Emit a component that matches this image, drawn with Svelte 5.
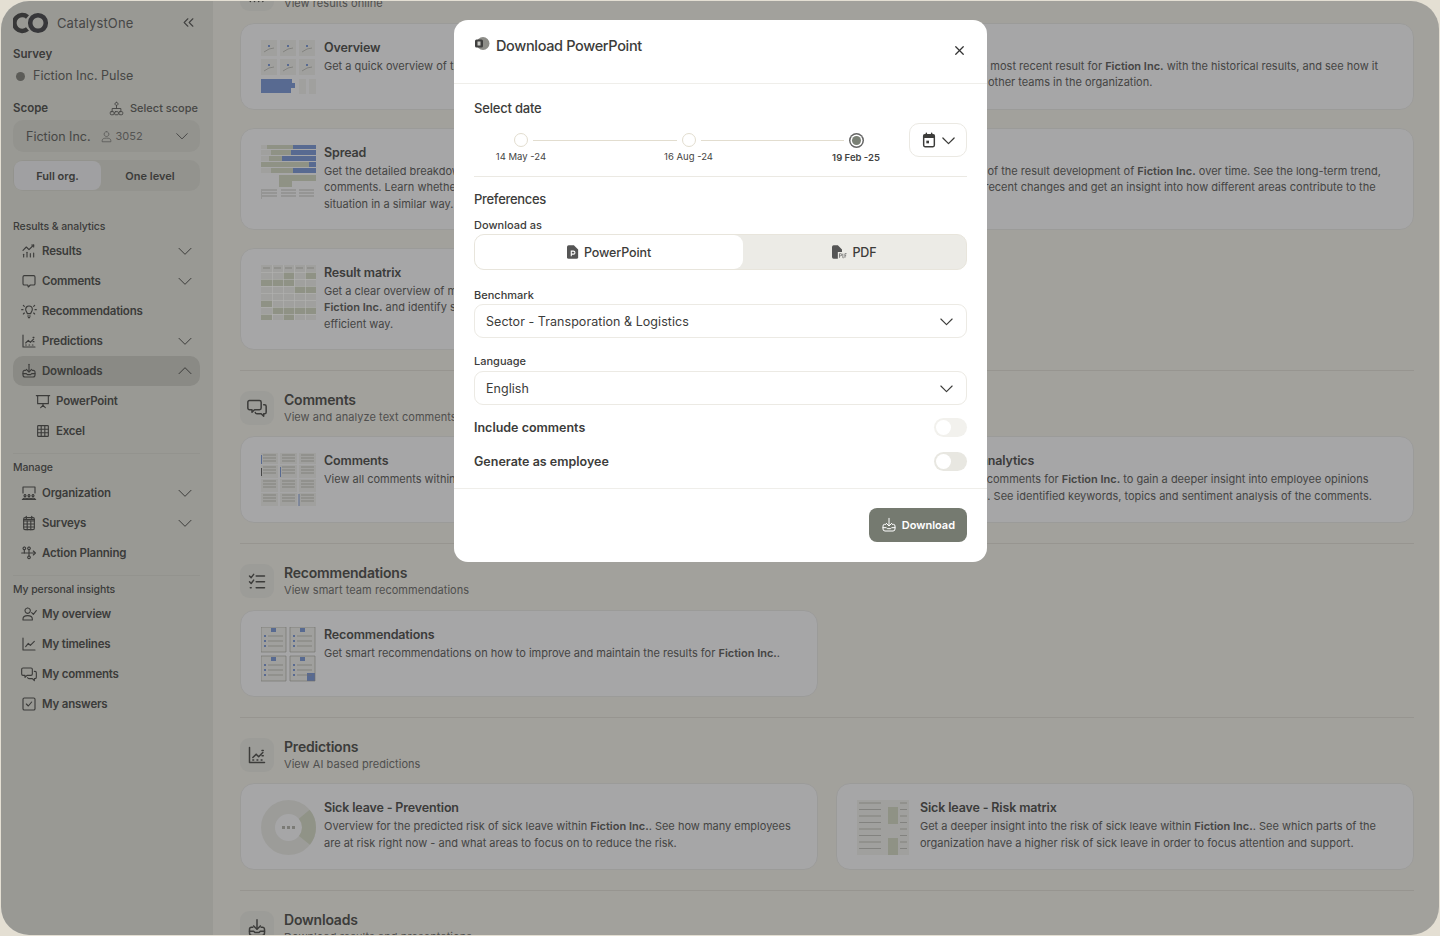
<script>
  const SAGE = '#cdd1bf';
  const BLUE = '#7f98d0';
  const PALE = '#e6e6e2';

  const icons = {
    chevDown: ['M3 8l9 9 9-9'],
    chevUp: ['M3 16l9-9 9 9'],
    chevsLeft: ['M11 18l-6-6 6-6', 'M19 18l-6-6 6-6'],
    close: ['M6 6l12 12', 'M18 6L6 18'],
    results: ['M4 21v-4', 'M9 21v-7', 'M14 21v-5', 'M19 21v-6', 'M3 11l5-5 4 4 7-7', 'M16 3h3v3'],
    comment: ['M5 4h14a2 2 0 0 1 2 2v10a2 2 0 0 1-2 2h-5l-3 3-1-3H5a2 2 0 0 1-2-2V6a2 2 0 0 1 2-2z'],
    bulb: ['M9.500 16c0-2-2.500-3-2.500-6.500a5 5 0 0 1 10 0c0 3.500-2.500 4.500-2.500 6.500z', 'M10 19.500h4', 'M11 22h2', 'M1 10h2', 'M21 10h2', 'M3.500 3.500L5 5', 'M20.500 3.500L19 5', 'M3.500 16.500L5 15', 'M20.500 16.500L19 15'],
    predict: ['M3 3v18h18', 'M7 15l4-4 3 3 5-5', 'M7 18h1', 'M12 18h1', 'M17 18h1', 'M18 6.500h1.500', 'M18 13h1.500'],
    download: ['M12 2v11', 'M8 9.500l4 4 4-4', 'M7 11H5.500A2.500 2.500 0 0 0 3 13.500V18a3 3 0 0 0 3 3h12a3 3 0 0 0 3-3v-4.500a2.500 2.500 0 0 0-2.500-2.500H17', 'M3 16h5l1.500 1.500h5L16 16h5'],
    slides: ['M2 4h20', 'M4 4v12h16V4', 'M12 16v2.500', 'M8.500 22l3.500-3.500 3.500 3.500'],
    grid: ['M5 4h14a1 1 0 0 1 1 1v14a1 1 0 0 1-1 1H5a1 1 0 0 1-1-1V5a1 1 0 0 1 1-1z', 'M4 9.300h16', 'M4 14.700h16', 'M9.300 4v16', 'M14.700 4v16'],
    org: ['M3 12V3h18v9', 'M6 14.500a1.500 1.500 0 1 0 0.010 0', 'M12 14.500a1.500 1.500 0 1 0 0.010 0', 'M18 14.500a1.500 1.500 0 1 0 0.010 0', 'M2 21.500h20', 'M3.500 21c0-2 5-2 5 0', 'M9.500 21c0-2 5-2 5 0', 'M15.500 21c0-2 5-2 5 0'],
    survey: ['M8 2v4', 'M16 2v4', 'M6 4h12a2 2 0 0 1 2 2v14a2 2 0 0 1-2 2H6a2 2 0 0 1-2-2V6a2 2 0 0 1 2-2z', 'M4 7h16', 'M4 9h16', 'M4 13.500h16', 'M4 18h16', 'M9.300 9v13', 'M14.700 9v13'],
    action: ['M5 3a2 2 0 1 0 .01 0', 'M12 3a2 2 0 1 0 .01 0', 'M12 16.500a2 2 0 1 0 .01 0', 'M1 12h20', 'M18.500 9l3 3-3 3', 'M5 7v5', 'M12 7v9.500'],
    userCheck: ['M10 3a4 4 0 1 0 .01 0', 'M3 21v-1.500C3 16 6 14.500 10 14.500s7 1.500 7 5V21z', 'M16 10l2.500 2.500L23 7'],
    timeline: ['M3 3v18h18', 'M7 16l4-5 3 3 6-6'],
    comments: ['M3 3h12a2 2 0 0 1 2 2v7a2 2 0 0 1-2 2H9l-3 3v-3H3a2 2 0 0 1-2-2V5a2 2 0 0 1 2-2z', 'M20 8h1a2 2 0 0 1 2 2v7a2 2 0 0 1-2 2h-1v3l-3-3h-5a2 2 0 0 1-2-1.500'],
    check: ['M5 3h14a2 2 0 0 1 2 2v14a2 2 0 0 1-2 2H5a2 2 0 0 1-2-2V5a2 2 0 0 1 2-2z', 'M8 12l3 3 5-6'],
    tasks: ['M3 6l2 2 3-4', 'M3 13l2 2 3-4', 'M4 20h1', 'M11 6h10', 'M11 13h10', 'M11 20h10'],
    sitemap: ['M12 2a2.500 2.500 0 1 0 .01 0', 'M12 7v5', 'M5 17v-5h14v5', 'M3.500 17h3a1.500 1.500 0 0 1 1.500 1.500v2A1.500 1.500 0 0 1 6.500 22h-3A1.500 1.500 0 0 1 2 20.500v-2A1.500 1.500 0 0 1 3.500 17z', 'M10.500 17h3a1.500 1.500 0 0 1 1.500 1.500v2a1.500 1.500 0 0 1-1.500 1.500h-3A1.500 1.500 0 0 1 9 20.500v-2a1.500 1.500 0 0 1 1.500-1.500z', 'M17.500 17h3a1.500 1.500 0 0 1 1.500 1.500v2a1.500 1.500 0 0 1-1.500 1.500h-3a1.500 1.500 0 0 1-1.500-1.500v-2a1.500 1.500 0 0 1 1.500-1.500z'],
    user: ['M12 3a4.500 4.500 0 1 0 .01 0', 'M4 21v-1.500C4 16 7.500 15 12 15s8 1 8 4.500V21z']
  };

  const nav = [
    {
      label: 'Results & analytics',
      items: [
        { icon: 'results', text: 'Results', chev: 'chevDown' },
        { icon: 'comment', text: 'Comments', chev: 'chevDown' },
        { icon: 'bulb', text: 'Recommendations' },
        { icon: 'predict', text: 'Predictions', chev: 'chevDown' },
        { icon: 'download', text: 'Downloads', chev: 'chevUp', active: true },
        { icon: 'slides', text: 'PowerPoint', sub: true },
        { icon: 'grid', text: 'Excel', sub: true }
      ]
    },
    {
      label: 'Manage',
      items: [
        { icon: 'org', text: 'Organization', chev: 'chevDown' },
        { icon: 'survey', text: 'Surveys', chev: 'chevDown' },
        { icon: 'action', text: 'Action Planning' }
      ]
    },
    {
      label: 'My personal insights',
      items: [
        { icon: 'userCheck', text: 'My overview' },
        { icon: 'timeline', text: 'My timelines' },
        { icon: 'comments', text: 'My comments' },
        { icon: 'check', text: 'My answers' }
      ]
    }
  ];

  // thumbnails are lists of [x, y, w, h, colour] rects and [x1, y1, x2, y2] dark lines
  function overviewThumb() {
    const rects = [], lines = [];
    for (const y of [0, 19]) {
      for (const x of [0, 19, 38]) {
        rects.push([x, y, 16, 16, PALE]);
        lines.push([x + 3, y + 12, x + 8, y + 9], [x + 8, y + 9, x + 13, y + 8]);
        rects.push([x + 7, y + 5, 2, 2, BLUE]);
      }
    }
    rects.push([0, 39, 31, 4, BLUE], [0, 43, 34, 5, BLUE], [0, 48, 30, 5, BLUE]);
    rects.push([38, 39, 7, 15, PALE], [48, 39, 7, 15, PALE]);
    return { rects, lines };
  }

  function spreadThumb() {
    const rects = [
      [0, 0, 32, 4, PALE], [6, 0, 26, 4, SAGE], [32, 0, 23, 4, BLUE],
      [0, 5, 30, 5, PALE], [10, 5, 20, 5, SAGE], [30, 5, 25, 5, BLUE],
      [0, 11, 21, 5, PALE], [8, 11, 13, 5, SAGE], [21, 11, 34, 5, BLUE],
      [0, 17, 48, 5, SAGE], [48, 17, 7, 5, BLUE],
      [0, 23, 32, 5, PALE], [10, 23, 22, 5, SAGE], [32, 23, 23, 5, BLUE],
      [18, 30, 37, 6, SAGE], [18, 36, 13, 6, SAGE]
    ];
    const lines = [];
    for (const y of [45, 48, 51]) {
      for (const x of [1, 20, 38]) lines.push([x, y, x + 15, y]);
    }
    lines.push([0, 44, 0, 54]);
    return { rects, lines };
  }

  function matrixThumb() {
    const rects = [[0, 0, 55, 55, PALE]];
    const on = [[2, 1], [4, 1], [0, 2], [1, 2], [2, 2], [3, 3], [4, 3], [0, 5], [1, 6], [2, 6], [3, 6], [4, 6], [0, 7], [2, 7]];
    for (const [c, r] of on) rects.push([c * 11, r * 7, 11, 7, SAGE]);
    for (let i = 1; i < 5; i++) rects.push([i * 11, 0, 0.6, 55, '#fff']);
    for (let i = 1; i < 8; i++) rects.push([0, i * 7, 55, 0.6, '#fff']);
    return { rects, lines: [[2, 3, 9, 3], [13, 3, 20, 3], [24, 3, 31, 3], [35, 3, 42, 3], [46, 3, 53, 3]] };
  }

  function commentsThumb() {
    const rects = [], lines = [];
    for (const x of [0, 19, 38]) {
      for (const y of [0, 12, 26, 40]) {
        rects.push([x, y, 17, y === 0 ? 11 : 13, PALE]);
        for (let l = 2; l < 11; l += 3) lines.push([x + 2, y + l, x + 15, y + l]);
      }
    }
    rects.push([0, 2, 1, 9, BLUE], [0, 15, 1, 8, '#666'], [19, 14, 1, 10, BLUE], [37.500, 41, 1, 12, BLUE]);
    return { rects, lines };
  }

  function recsThumb() {
    const rects = [], lines = [];
    for (const [x, y] of [[0, 0], [29, 0], [0, 29], [29, 29]]) {
      rects.push([x, y, 25, 25, PALE]);
      rects.push([x + 10, y + 1, 5, 4, BLUE]);
      for (const l of [9, 14, 19]) {
        rects.push([x + 3, y + l - 1, 2, 2, BLUE]);
        lines.push([x + 7, y + l, x + 22, y + l]);
      }
      lines.push([x, y, x + 25, y], [x, y + 25, x + 25, y + 25], [x, y, x, y + 25], [x + 25, y, x + 25, y + 25]);
    }
    rects.push([46, 46, 8, 8, BLUE]);
    return { rects, lines };
  }

  function riskThumb() {
    const rects = [[0, 0, 52, 55, PALE], [31, 7, 10, 17, SAGE], [31, 38, 10, 17, SAGE]];
    const lines = [];
    for (let y = 3; y < 55; y += 6.500) {
      lines.push([2, y, 24, y], [43, y, 50, y]);
    }
    return { rects, lines };
  }

  const thumbs = {
    overview: overviewThumb(),
    spread: spreadThumb(),
    matrix: matrixThumb(),
    comments: commentsThumb(),
    recs: recsThumb(),
    risk: riskThumb()
  };

  const sections = [
    {
      icon: 'results',
      title: 'Results',
      sub: 'View results online',
      cards: [
        { thumb: 'overview', title: 'Overview', lines: [['Get a quick overview of the main results for ', 'Fiction Inc.']] },
        { thumb: 'overview', title: 'History', lines: [['Compare the most recent result for ', 'Fiction Inc.', ' with the historical results, and see how it'], ['compares to other teams in the organization.']] },
        { thumb: 'spread', title: 'Spread', lines: [['Get the detailed breakdown of answers and'], ['comments. Learn whether employees see the'], ['situation in a similar way.']] },
        { thumb: 'spread', title: 'Timeline', lines: [['An overview of the result development of ', 'Fiction Inc.', ' over time. See the long-term trend,'], ['and identify recent changes and get an insight into how different areas contribute to the'], ['total.']] },
        { thumb: 'matrix', title: 'Result matrix', lines: [['Get a clear overview of materials across'], ['', 'Fiction Inc.', ' and identify strengths in an'], ['efficient way.']] }
      ]
    },
    {
      icon: 'comments',
      title: 'Comments',
      sub: 'View and analyze text comments',
      cards: [
        { thumb: 'comments', title: 'Comments', lines: [['View all comments within the organization.']] },
        { thumb: 'comments', title: 'Comment analytics', lines: [['Examine the comments for ', 'Fiction Inc.', ' to gain a deeper insight into employee opinions'], ['and attitudes. See identified keywords, topics and sentiment analysis of the comments.']] }
      ]
    },
    {
      icon: 'tasks',
      title: 'Recommendations',
      sub: 'View smart team recommendations',
      cards: [
        { thumb: 'recs', title: 'Recommendations', lines: [['Get smart recommendations on how to improve and maintain the results for ', 'Fiction Inc.', '.']] }
      ]
    },
    {
      icon: 'predict',
      title: 'Predictions',
      sub: 'View AI based predictions',
      cards: [
        { thumb: 'donut', title: 'Sick leave - Prevention', lines: [['Overview for the predicted risk of sick leave within ', 'Fiction Inc.', '. See how many employees'], ['are at risk right now - and what areas to focus on to reduce the risk.']] },
        { thumb: 'risk', title: 'Sick leave - Risk matrix', lines: [['Get a deeper insight into the risk of sick leave within ', 'Fiction Inc.', '. See which parts of the'], ['organization have a higher risk of sick leave in order to focus attention and support.']] }
      ]
    },
    {
      icon: 'download',
      title: 'Downloads',
      sub: 'Download results and presentations',
      cards: []
    }
  ];

  const steps = [
    { date: '14 May -24' },
    { date: '16 Aug -24' },
    { date: '19 Feb -25', active: true }
  ];
</script>

{#snippet icon(name, size = 16, width = 1.6)}
  <svg class="icon" viewBox="0 0 24 24" width={size} height={size} stroke-width={width}>
    {#each icons[name] as d}
      <path {d} />
    {/each}
  </svg>
{/snippet}

{#snippet thumbnail(name)}
  <svg class="thumb" viewBox="0 0 55 55" width="55" height="55">
    {#if name === 'donut'}
      <circle cx="27.500" cy="27.500" r="20.500" fill="none" stroke="#e0e0dc" stroke-width="14" />
      <circle cx="27.500" cy="27.500" r="20.500" fill="none" stroke="#cfd3c2" stroke-width="14" stroke-dasharray="28 101" transform="rotate(-40 27.500 27.500)" />
      <path d="M21 27.500h3M26 27.500h3M31 27.500h3" stroke="#b0b0aa" stroke-width="3" />
    {:else}
      {#each thumbs[name].rects as [x, y, w, h, fill]}
        <rect {x} {y} width={w} height={h} {fill} />
      {/each}
      {#each thumbs[name].lines as [x1, y1, x2, y2]}
        <line {x1} {y1} {x2} {y2} stroke="#9d9d98" stroke-width="0.6" />
      {/each}
    {/if}
  </svg>
{/snippet}

<div class="app">
  <div class="window">
    <aside class="sidebar">
      <div class="brand">
        <svg class="logo" viewBox="0 0 36 22" width="36" height="22">
          <path d="M14.500 4.900a8 8 0 1 0 0 12.200" fill="none" stroke="#4f4f4f" stroke-width="4.600" />
          <circle cx="25" cy="11" r="7.800" fill="none" stroke="#4f5054" stroke-width="4.600" />
        </svg>
        <span class="brand-name">CatalystOne</span>
        <span class="collapse">{@render icon('chevsLeft', 15, 1.8)}</span>
      </div>
      <div class="small-head survey">Survey</div>
      <div class="pulse"><span class="dot"></span>Fiction Inc. Pulse</div>
      <div class="scope-row">
        <span class="small-head">Scope</span>
        <span class="select-scope">{@render icon('sitemap', 15, 1.5)}Select scope</span>
      </div>
      <div class="scope-select">
        <span class="scope-name">Fiction Inc.</span>
        <span class="scope-count">{@render icon('user', 13, 1.4)}3052</span>
        <span class="push">{@render icon('chevDown', 14, 1.7)}</span>
      </div>
      <div class="scope-seg">
        <span class="on">Full org.</span>
        <span>One level</span>
      </div>

      {#each nav as group, g}
        {#if g > 0}<div class="side-rule"></div>{/if}
        <div class="group-label" class:first={g === 0}>{group.label}</div>
        <ul class="nav" class:tight={g !== 1}>
          {#each group.items as item}
            <li class="nav-item" class:active={item.active} class:sub={item.sub}>
              {@render icon(item.icon, 16, 1.7)}
              <span>{item.text}</span>
              {#if item.chev}
                <span class="push chev">{@render icon(item.chev, 16, 1.5)}</span>
              {/if}
            </li>
          {/each}
        </ul>
      {/each}
    </aside>

    <main class="main">
      <div class="content">
        {#each sections as section}
          <section class="section">
            <header class="sec-head">
              <span class="sec-icon">{@render icon(section.icon, 20, 1.8)}</span>
              <div>
                <h2>{section.title}</h2>
                <p>{section.sub}</p>
              </div>
            </header>
            {#if section.cards.length}
              <div class="cards">
                {#each section.cards as card}
                  <article class="card">
                    {@render thumbnail(card.thumb)}
                    <div class="card-text">
                      <h3>{card.title}</h3>
                      {#each card.lines as [before, strong, after]}
                        <p>{before}{#if strong}<b>{strong}</b>{/if}{after ?? ''}</p>
                      {/each}
                    </div>
                  </article>
                {/each}
              </div>
            {/if}
          </section>
        {/each}
      </div>
    </main>

    <div class="backdrop">
      <div class="modal">
        <header class="modal-head">
          <svg class="ppt" viewBox="0 0 16 16" width="16" height="16">
            <circle cx="9" cy="7.500" r="6.500" fill="#8d8d88" />
            <rect x="1" y="3.500" width="8" height="8" rx="1.500" fill="#3f3f3f" />
            <rect x="3.500" y="5.500" width="3" height="4" fill="#c9c9c4" />
          </svg>
          <h1>Download PowerPoint</h1>
          <span class="close">{@render icon('close', 15, 2)}</span>
        </header>

        <div class="modal-body">
          <h4>Select date</h4>
          <div class="date-row">
            <div class="stepper">
              {#each steps as step, i}
                {#if i > 0}<span class="track"></span>{/if}
                <div class="step" class:current={step.active}>
                  <span class="knob"></span>
                  <span class="date">{step.date}</span>
                </div>
              {/each}
            </div>
            <div class="cal-btn">
              <svg class="icon" viewBox="0 0 24 24" width="16" height="16" stroke-width="2.200">
                <path d="M8 2v4M16 2v4M6 4h12a2 2 0 0 1 2 2v14a2 2 0 0 1-2 2H6a2 2 0 0 1-2-2V6a2 2 0 0 1 2-2z" />
                <rect class="solid" x="4" y="4" width="16" height="5" />
                <rect class="solid" x="8" y="13" width="4" height="4" />
              </svg>
              {@render icon('chevDown', 15, 2)}
            </div>
          </div>
          <div class="modal-rule"></div>
          <h4 class="prefs">Preferences</h4>
          <div class="field-label first">Download as</div>
          <div class="format-seg">
            <div class="format on">
              <svg class="fmt-icon" viewBox="0 0 14 16" width="12" height="14">
                <path d="M2 0h6l5 5v9a2 2 0 0 1-2 2H2a2 2 0 0 1-2-2V2a2 2 0 0 1 2-2z" fill="#555" />
                <path d="M5 13V7h2.500a1.500 1.500 0 0 1 0 3.500H5" fill="none" stroke="#fff" stroke-width="1.300" />
              </svg>
              PowerPoint
            </div>
            <div class="format">
              <svg class="fmt-icon" viewBox="0 0 18 16" width="15" height="14">
                <path d="M2 0h5l5 5v3H7v8H2a2 2 0 0 1-2-2V2a2 2 0 0 1 2-2z" fill="#555" />
                <path d="M9 15v-5h1.500a1 1 0 0 1 0 2.500H9M13 10v5h1M17.500 10H15.500v5M15.500 12.500h1.500" fill="none" stroke="#555" stroke-width="0.800" />
              </svg>
              PDF
            </div>
          </div>
          <div class="field-label bench">Benchmark</div>
          <div class="dropdown">Sector - Transporation &amp; Logistics{@render icon('chevDown', 15, 1.8)}</div>
          <div class="field-label lang">Language</div>
          <div class="dropdown">English{@render icon('chevDown', 15, 1.8)}</div>
          <div class="switch-row first-switch">
            <span>Include comments</span>
            <span class="switch pale"></span>
          </div>
          <div class="switch-row">
            <span>Generate as employee</span>
            <span class="switch"></span>
          </div>
        </div>

        <footer class="modal-foot">
          <button class="download">{@render icon('download', 16, 1.5)}Download</button>
        </footer>
      </div>
    </div>
  </div>
</div>

<style>
  :global(body) {
    margin: 0;
    font-family: 'Inter', 'Liberation Sans', sans-serif;
    background: #e4dfd3;
  }

  .app {
    width: 1440px;
    height: 936px;
    padding: 1px;
    box-sizing: border-box;
    background: #e4dfd3;
    overflow: hidden;
  }

  .window {
    position: relative;
    display: flex;
    height: 100%;
    border-radius: 28px;
    overflow: hidden;
    background: #e9e7e0;
    color: #565654;
  }

  .icon {
    fill: none;
    stroke: currentColor;
    stroke-linecap: round;
    stroke-linejoin: round;
    flex: none;
  }

  .icon .solid {
    fill: currentColor;
    stroke: none;
  }

  .thumb {
    display: block;
    flex: none;
  }

  /* sidebar */
  .sidebar {
    width: 212px;
    flex: none;
    box-sizing: border-box;
    padding: 0 13px 0 12px;
    background: #dcdcd5;
    overflow: hidden;
  }

  .brand {
    display: flex;
    align-items: center;
    height: 43px;
  }

  .logo {
    flex: none;
  }

  .brand-name {
    margin-left: 8px;
    font-size: 13px;
    letter-spacing: 0.1px;
    color: #666;
  }

  .collapse {
    display: flex;
    margin-left: auto;
    margin-right: 4px;
    color: #5f5f5d;
  }

  .small-head {
    font-size: 11.500px;
    font-weight: 600;
    line-height: 16px;
  }

  .survey {
    margin-top: 2px;
  }

  .pulse {
    display: flex;
    align-items: center;
    gap: 8px;
    margin-top: 5px;
    font-size: 12.500px;
    line-height: 18px;
    color: #666664;
  }

  .dot {
    width: 9px;
    height: 9px;
    margin-left: 3px;
    border-radius: 50%;
    background: #85857f;
  }

  .scope-row {
    display: flex;
    align-items: center;
    justify-content: space-between;
    margin-top: 14px;
    height: 18px;
  }

  .select-scope {
    display: flex;
    align-items: center;
    gap: 6px;
    margin-right: 2px;
    font-size: 11px;
    font-weight: 500;
    color: #666664;
  }

  .scope-select {
    display: flex;
    align-items: center;
    height: 32px;
    margin-top: 3px;
    padding: 0 11px 0 13px;
    border-radius: 10px;
    background: #d3d3cc;
    color: #666664;
  }

  .scope-name {
    font-size: 12.500px;
  }

  .scope-count {
    display: flex;
    align-items: center;
    gap: 3px;
    margin-left: 9px;
    font-size: 11px;
    color: #7a7a78;
  }

  .push {
    display: flex;
    margin-left: auto;
  }

  .scope-seg {
    display: flex;
    height: 31px;
    margin-top: 8px;
    padding: 1px;
    box-sizing: border-box;
    border-radius: 10px;
    background: #d3d3cc;
    font-size: 11px;
    font-weight: 600;
  }

  .scope-seg span {
    flex: 1;
    display: flex;
    align-items: center;
    justify-content: center;
    border-radius: 8px;
  }

  .scope-seg .on {
    background: #e6e6e8;
    flex: 0 0 87px;
  }

  .group-label {
    margin-top: 6px;
    font-size: 10.500px;
    font-weight: 500;
    line-height: 16px;
    letter-spacing: -0.1px;
  }

  .group-label.first {
    margin-top: 28px;
  }

  .side-rule {
    height: 1px;
    margin-top: 7px;
    background: #d3d3cc;
  }

  .nav {
    list-style: none;
    margin: 2px 0 0;
    padding: 0;
  }

  .nav.tight {
    margin-top: 1px;
  }

  .nav-item {
    display: flex;
    align-items: center;
    gap: 5px;
    height: 30px;
    padding: 0 7px 0 8px;
    border-radius: 10px;
    font-size: 11.500px;
    font-weight: 600;
    letter-spacing: -0.2px;
  }

  .nav-item.active {
    background: #c6c6bf;
  }

  .nav-item.sub {
    padding-left: 22px;
  }

  /* main content, scrolled a little so the first heading is cut off */
  .main {
    flex: 1;
    min-width: 0;
    overflow: hidden;
  }

  .content {
    margin-top: -24px;
    padding: 0 25px 0 27px;
  }

  .section {
    padding-bottom: 20px;
    margin-bottom: 20px;
    border-bottom: 1px solid #d8d6cf;
  }

  .sec-head {
    display: flex;
    align-items: center;
    gap: 10px;
    height: 34px;
  }

  .sec-icon {
    display: flex;
    align-items: center;
    justify-content: center;
    width: 34px;
    height: 34px;
    border-radius: 9px;
    background: #e0e0da;
  }

  .sec-head h2 {
    margin: 0;
    font-size: 14px;
    font-weight: 600;
    line-height: 18px;
    letter-spacing: -0.2px;
  }

  .sec-head p {
    margin: 0;
    font-size: 11px;
    line-height: 16px;
    letter-spacing: 0.05px;
    color: #727270;
  }

  .cards {
    display: grid;
    grid-template-columns: minmax(0, 1fr) minmax(0, 1fr);
    gap: 18px;
    margin-top: 11.500px;
  }

  .card {
    display: flex;
    gap: 8px;
    padding: 16px 20px 14px;
    box-sizing: border-box;
    border: 1px solid #dfdfdc;
    border-radius: 14px;
    background: #eeeef0;
  }

  .card-text {
    margin-top: -1px;
    padding-bottom: 2px;
  }

  .card h3 {
    margin: 0 0 1px;
    font-size: 12.500px;
    font-weight: 600;
    line-height: 18px;
    letter-spacing: -0.15px;
  }

  .card p {
    margin: 0;
    font-size: 11px;
    line-height: 16.700px;
    white-space: nowrap;
    color: #636361;
  }

  .card b {
    font-weight: 600;
  }

  /* modal */
  .backdrop {
    position: absolute;
    inset: 0;
    display: flex;
    justify-content: center;
    align-items: flex-start;
    padding-top: 19px;
    background: rgba(0, 0, 0, 0.3);
  }

  .modal {
    width: 533px;
    height: 542px;
    margin-left: 1px;
    box-sizing: border-box;
    border-radius: 14px;
    background: #fff;
    color: #3c3c3a;
    overflow: hidden;
  }

  .modal-head {
    display: flex;
    align-items: flex-start;
    height: 64px;
    padding: 16px 20px 0;
    box-sizing: border-box;
    border-bottom: 1px solid #efeeea;
  }

  .ppt {
    flex: none;
  }

  .modal-head h1 {
    margin: 0 0 0 6px;
    font-size: 14.500px;
    font-weight: 500;
    line-height: 19px;
    letter-spacing: -0.35px;
  }

  .close {
    display: flex;
    margin-left: auto;
    margin-top: 7px;
    color: #333;
  }

  .modal-body {
    height: 405px;
    padding: 15px 20px 0;
    box-sizing: border-box;
    border-bottom: 1px solid #efeeea;
  }

  .modal-body h4 {
    margin: 0;
    font-size: 13px;
    font-weight: 500;
    line-height: 18px;
    letter-spacing: -0.2px;
  }

  .modal-body .prefs {
    margin-top: 13px;
    letter-spacing: -0.3px;
  }

  .date-row {
    display: flex;
    align-items: flex-start;
    justify-content: space-between;
    margin-top: 6px;
  }

  .stepper {
    display: flex;
    width: 349px;
    margin: 10px 0 0 40px;
  }

  .step {
    display: flex;
    flex-direction: column;
    align-items: center;
    width: 14px;
    flex: none;
  }

  .knob {
    width: 12px;
    height: 12px;
    border: 1.500px solid #e2ddcf;
    border-radius: 50%;
    box-sizing: content-box;
    background: #fff;
    flex: none;
  }

  .step.current .knob {
    width: 9px;
    height: 9px;
    margin: 3px;
    border: none;
    background: #7a8075;
    box-shadow: 0 0 0 1.500px #fff, 0 0 0 3px #666;
  }

  .date {
    margin-top: 3px;
    font-size: 9.500px;
    line-height: 14px;
    white-space: nowrap;
    color: #444;
  }

  .step.current .date {
    font-weight: 600;
  }

  .track {
    flex: 1;
    height: 1px;
    margin: 7px 5px 0;
    background: #e2ddcf;
  }

  .cal-btn {
    display: flex;
    align-items: center;
    justify-content: center;
    gap: 4px;
    width: 58px;
    height: 34px;
    border: 1px solid #ebe9e3;
    border-radius: 10px;
    box-sizing: border-box;
  }

  .modal-rule {
    height: 1px;
    margin-top: 11px;
    background: #ebe9e3;
  }

  .field-label {
    margin-top: 15px;
    font-size: 11px;
    font-weight: 500;
    line-height: 16px;
  }

  .field-label.first {
    margin-top: 9px;
  }

  .field-label.bench {
    margin-top: 17px;
  }

  .field-label.lang {
    margin-top: 15px;
    margin-bottom: 2px;
  }

  .bench + .dropdown {
    margin-top: 1px;
  }

  .format-seg {
    display: flex;
    height: 36px;
    margin-top: 1px;
    border: 1px solid #e8e5dc;
    border-radius: 10px;
    box-sizing: border-box;
    background: #ecebe6;
  }

  .format {
    flex: 1;
    display: flex;
    align-items: center;
    justify-content: center;
    gap: 5px;
    font-size: 12.500px;
    font-weight: 500;
    letter-spacing: -0.1px;
  }

  .format.on {
    flex: 0 0 268px;
    background: #fff;
    border-radius: 9px;
  }

  .fmt-icon {
    flex: none;
  }

  .dropdown {
    display: flex;
    align-items: center;
    justify-content: space-between;
    height: 34px;
    padding: 0 12px 0 11px;
    border: 1px solid #eceae4;
    border-radius: 9px;
    box-sizing: border-box;
    font-size: 12.500px;
    letter-spacing: 0.05px;
  }

  .switch-row {
    display: flex;
    align-items: center;
    justify-content: space-between;
    height: 19px;
    margin-top: 15px;
    font-size: 12.500px;
    font-weight: 600;
  }

  .first-switch {
    margin-top: 13px;
  }

  .switch {
    position: relative;
    width: 33px;
    height: 19px;
    border-radius: 10px;
    background: #e8e7e1;
  }

  .switch.pale {
    background: #f2f1ed;
  }

  .switch::after {
    content: '';
    position: absolute;
    left: 2px;
    top: 2px;
    width: 15px;
    height: 15px;
    border-radius: 50%;
    background: #fff;
  }

  .modal-foot {
    display: flex;
    justify-content: flex-end;
    padding: 19px 20px 0;
  }

  .download {
    display: flex;
    align-items: center;
    gap: 5px;
    height: 34px;
    padding: 0 12px;
    border: none;
    border-radius: 8px;
    background: #757a70;
    color: #fff;
    font: 600 11px 'Inter', 'Liberation Sans', sans-serif;
  }
</style>
